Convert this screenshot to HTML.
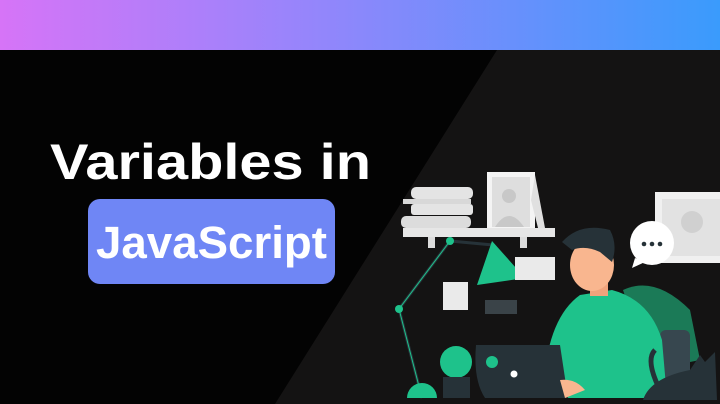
<!DOCTYPE html>
<html><head><meta charset="utf-8"><style>
html,body{margin:0;padding:0;background:#030303;}
svg{display:block}
</style></head><body>
<svg width="720" height="404" viewBox="0 0 720 404" xmlns="http://www.w3.org/2000/svg">
<defs>
<linearGradient id="g" x1="0" y1="0" x2="1" y2="0">
<stop offset="0" stop-color="#d674f7"/><stop offset="0.4" stop-color="#9a84fb"/><stop offset="1" stop-color="#3a9bfc"/>
</linearGradient>
</defs>
<rect width="720" height="404" fill="#030303"/>
<rect width="720" height="50" fill="url(#g)"/>
<polygon points="497,50 720,50 720,404 275,404" fill="#141313"/>
<text x="50" y="179" textLength="321" lengthAdjust="spacingAndGlyphs" font-family="Liberation Sans, sans-serif" font-weight="bold" font-size="50" fill="#fff">Variables in</text>
<rect x="88" y="199" width="247" height="85" rx="12" fill="#6f86f5"/>
<text x="96" y="258" textLength="231" lengthAdjust="spacingAndGlyphs" font-family="Liberation Sans, sans-serif" font-weight="bold" font-size="45" fill="#fff">JavaScript</text>

<!-- right frame -->
<rect x="655" y="192" width="70" height="71" fill="#f0f0f0"/>
<rect x="662" y="199" width="58" height="57" fill="#e2e2e2"/>
<circle cx="692" cy="222" r="11" fill="#d0d0d0"/>
<!-- books -->
<rect x="411" y="187" width="62" height="12" rx="5" fill="#e4e4e4"/>
<rect x="403" y="199" width="68" height="5" fill="#d8d8d8"/>
<rect x="411" y="204" width="62" height="11" rx="3" fill="#e4e4e4"/>
<rect x="401" y="216" width="70" height="12" rx="5" fill="#dcdcdc"/>
<!-- frame -->
<rect x="487" y="172" width="48" height="56" fill="#f4f4f4"/>
<rect x="492" y="177" width="38" height="50" fill="#dedede"/>
<circle cx="509" cy="196" r="7" fill="#c8c8c8"/>
<path d="M495 227 Q509 205 524 227Z" fill="#c8c8c8"/>
<polygon points="535,175 545,228 538,228 531,200" fill="#e0e0e0"/>
<!-- shelf -->
<rect x="403" y="228" width="152" height="9" fill="#e6e6e6"/>
<rect x="428" y="237" width="7" height="11" fill="#dcdcdc"/>
<rect x="520" y="237" width="7" height="11" fill="#dcdcdc"/>
<!-- lamp -->
<path d="M422 398 L399 309 L450 241 L493 245" stroke="#263238" stroke-width="3" fill="none"/>
<path d="M422 398 L399 309 L450 241" stroke="#1ec28b" stroke-width="1" fill="none"/>
<circle cx="399" cy="309" r="4" fill="#1ec28b"/><circle cx="450" cy="241" r="4" fill="#1ec28b"/>
<polygon points="492,241 477,285 525,278" fill="#1ec28b"/>
<path d="M407 398 A15 15 0 0 1 437 398Z" fill="#1ec28b"/>
<!-- notes -->
<rect x="515" y="257" width="40" height="23" fill="#eaeaea"/>
<rect x="443" y="282" width="25" height="28" fill="#eaeaea"/>
<rect x="485" y="300" width="32" height="14" fill="#3a4348"/>
<!-- speech bubble -->
<circle cx="652" cy="243" r="22" fill="#fff"/>
<polygon points="635,258 632,268 645,262" fill="#fff"/>
<circle cx="644" cy="244" r="2.3" fill="#263238"/><circle cx="652" cy="244" r="2.3" fill="#263238"/><circle cx="660" cy="244" r="2.3" fill="#263238"/>
<!-- chair -->
<path d="M623 290 Q655 275 690 310 L700 360 L650 370Z" fill="#1b7a57"/>
<rect x="660" y="330" width="30" height="60" rx="6" fill="#37474f"/>
<!-- body -->
<path d="M543 398 Q545 320 580 295 L612 290 Q650 300 662 340 L667 398Z" fill="#1ec28b"/>
<!-- head -->
<rect x="590" y="280" width="18" height="16" fill="#f0a37c"/>
<ellipse cx="592" cy="265" rx="22" ry="26" fill="#f9b68f"/>
<path d="M562 242 Q580 222 610 230 Q618 245 612 262 L600 252 Q585 245 572 250Z" fill="#263238"/>
<!-- laptop -->
<path d="M476 345 L560 345 L568 398 L485 398 Q473 380 476 345Z" fill="#263238"/>
<circle cx="492" cy="362" r="6" fill="#1ec28b"/><circle cx="514" cy="374" r="3.5" fill="#fff"/>
<path d="M560 380 Q575 378 585 390 L565 398Z" fill="#f9b68f"/>
<!-- cactus -->
<circle cx="456" cy="362" r="16" fill="#1ec28b"/>
<rect x="443" y="377" width="27" height="21" fill="#263238"/>
<!-- cat -->
<path d="M643 400 Q650 378 690 370 L700 355 L705 362 L715 352 L717 400Z" fill="#263238"/>
<path d="M660 390 Q645 360 655 350" stroke="#263238" stroke-width="5" fill="none"/>
</svg>
</body></html>
